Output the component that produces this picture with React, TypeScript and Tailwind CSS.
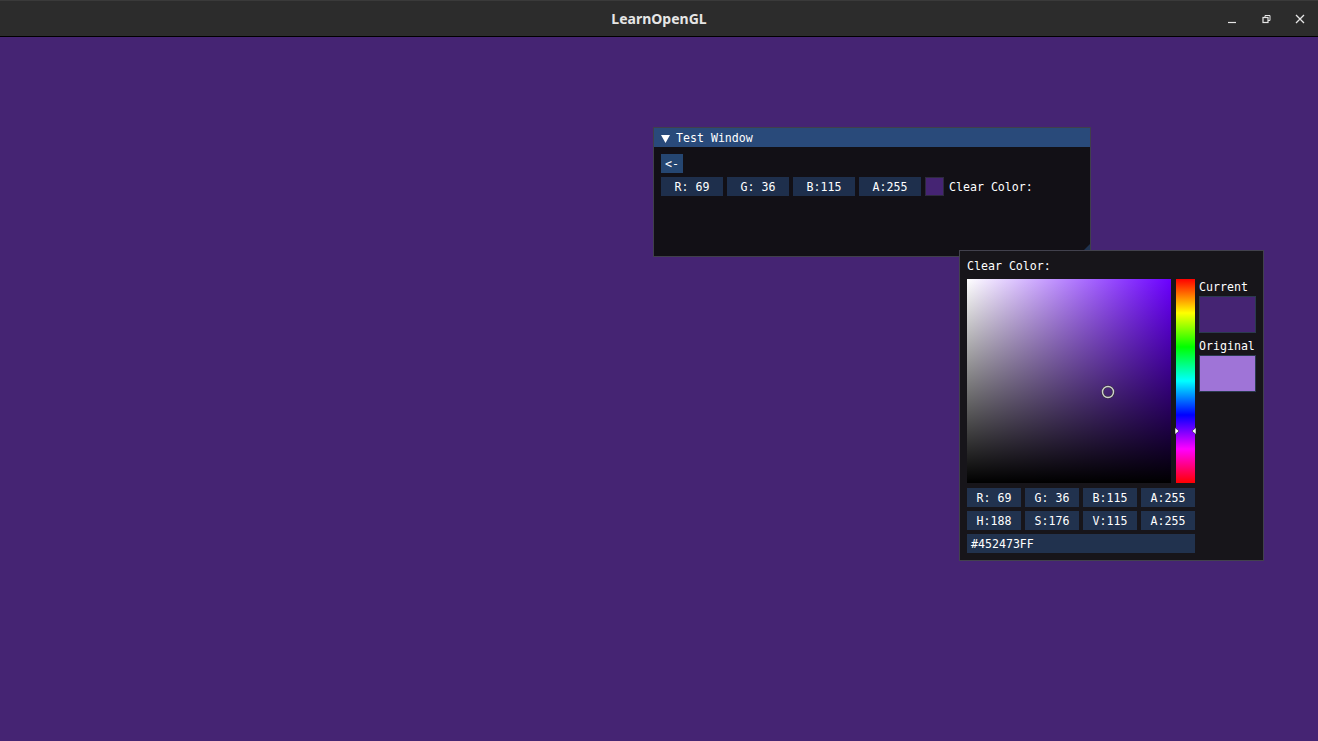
import React from "react";

const mono = { fontFamily: '"DejaVu Sans Mono", "Liberation Mono", monospace' } as React.CSSProperties;

function Field({ w, children, left }: { w: string; children: React.ReactNode; left?: boolean }) {
  return (
    <div
      className={`${w} h-[19px] pt-[2px] bg-[#1e2f4c] flex items-center ${left ? "justify-start pl-[4px]" : "justify-center"} text-white text-[11.6px] leading-none whitespace-pre`}
    >
      {children}
    </div>
  );
}

function PField({ children, left, w }: { children: React.ReactNode; left?: boolean; w: string }) {
  return (
    <div
      className={`${w} h-[19px] pt-[2px] bg-[#21324e] flex items-center ${left ? "justify-start pl-[4px]" : "justify-center"} text-white text-[11.6px] leading-none whitespace-pre`}
    >
      {children}
    </div>
  );
}

export default function App() {
  return (
    <div className="w-[1318px] h-[741px] flex flex-col overflow-hidden bg-[#452473]">
      {/* OS title bar */}
      <div className="h-[37px] shrink-0 bg-[#2c2c2c] border-t border-t-[#3a3a3a] border-b border-b-black flex items-center relative">
        <div
          className="flex-1 text-center text-[14px] font-bold text-[#e6e6e6]"
          style={{ fontFamily: '"Noto Sans", "Open Sans", sans-serif' }}
        >
          LearnOpenGL
        </div>
        <div className="absolute right-[12px] top-0 h-[36px] flex items-center gap-[22px]">
          <svg width="12" height="12" viewBox="0 0 12 12">
            <line x1="2" y1="9.5" x2="10" y2="9.5" stroke="#e6e6e6" strokeWidth="1.2" />
          </svg>
          <svg width="12" height="12" viewBox="0 0 12 12">
            <rect x="3" y="4.5" width="5" height="5" fill="none" stroke="#e6e6e6" strokeWidth="1.2" />
            <path d="M5 4.5 V2.5 H10 V7.5 H8" fill="none" stroke="#e6e6e6" strokeWidth="1" />
          </svg>
          <svg width="12" height="12" viewBox="0 0 12 12">
            <path d="M2 2 L10 10 M10 2 L2 10" stroke="#e6e6e6" strokeWidth="1.3" />
          </svg>
        </div>
      </div>

      {/* Desktop area */}
      <div className="relative flex-1" style={mono}>
        {/* Test Window */}
        <div className="absolute left-[653px] top-[90px] w-[438px] h-[130px] border border-[rgba(110,110,128,0.5)] bg-[#121016] flex flex-col">
          <div className="h-[19px] pt-[2px] bg-[#294a7a] flex items-center pl-[7px] gap-[6px] text-white text-[11.6px] leading-none">
            <svg width="9" height="8" viewBox="0 0 9 8">
              <path d="M0 0 H9 L4.5 8 Z" fill="#ffffff" />
            </svg>
            <span>Test Window</span>
          </div>
          <div className="flex flex-col gap-[4px] pl-[7px] pt-[7px]">
            <div className="w-[22px] h-[19px] pt-[2px] bg-[#254671] flex items-center justify-center text-white text-[11.6px] leading-none">
              &lt;-
            </div>
            <div className="flex items-center gap-[4px]">
              <Field w="w-[62px]">R: 69</Field>
              <Field w="w-[62px]">G: 36</Field>
              <Field w="w-[62px]">B:115</Field>
              <Field w="w-[62px]">A:255</Field>
              <div className="w-[19px] h-[19px] bg-[#452473] border border-[#2e2b3e]" />
              <span className="text-white text-[11.6px] leading-none pt-[2px] ml-[1px]">Clear Color:</span>
            </div>
          </div>
          <div className="flex-1" />
          <div className="flex justify-end">
            <svg width="12" height="12" viewBox="0 0 12 12">
              <path d="M12 0 V12 H0 Z" fill="#1f3350" />
            </svg>
          </div>
        </div>

        {/* Color picker popup */}
        <div className="absolute left-[959px] top-[213px] w-[305px] h-[311px] border border-[rgba(110,110,128,0.5)] bg-[#17151a] pl-[7px] pt-[8px]">
          <div className="h-[13px] pt-[2px] flex items-center text-white text-[11.6px] leading-none">Clear Color:</div>
          <div className="flex mt-[7px]">
            {/* SV square */}
            <div
              className="relative w-[204px] h-[204px]"
              style={{ background: "linear-gradient(to right, #ffffff, #6b00ff)" }}
            >
              <div
                className="absolute inset-0"
                style={{ background: "linear-gradient(to bottom, rgba(0,0,0,0), #000000)" }}
              />
              <svg className="absolute left-[134px] top-[106px]" width="14" height="14" viewBox="0 0 14 14">
                <circle cx="7" cy="7" r="5.5" fill="none" stroke="#333" strokeWidth="2.5" />
                <circle cx="7" cy="7" r="5.5" fill="none" stroke="#d0d0d0" strokeWidth="1.4" />
              </svg>
            </div>
            {/* Hue bar */}
            <div
              className="relative w-[19px] h-[204px] ml-[5px]"
              style={{
                background:
                  "linear-gradient(to bottom, #ff0000 0%, #ffff00 16.67%, #00ff00 33.33%, #00ffff 50%, #0000ff 66.67%, #ff00ff 83.33%, #ff0000 100%)",
              }}
            >
              <svg className="absolute left-[-1px] top-[148px]" width="21" height="8" viewBox="0 0 21 8">
                <path d="M0 0.5 L4 4 L0 7.5 Z" fill="#ffffff" stroke="#000" strokeWidth="0.5" />
                <path d="M21 0.5 L17 4 L21 7.5 Z" fill="#ffffff" stroke="#000" strokeWidth="0.5" />
              </svg>
            </div>
            {/* Current / Original */}
            <div className="flex flex-col ml-[4px]">
              <div className="h-[13px] mt-[1px] pt-[2px] flex items-center text-white text-[11.6px] leading-none">Current</div>
              <div className="w-[57px] h-[37px] mt-[3px] bg-[#452473] border border-[#2b3a4f]" />
              <div className="h-[13px] mt-[6px] pt-[2px] flex items-center text-white text-[11.6px] leading-none">Original</div>
              <div className="w-[57px] h-[37px] mt-[3px] bg-[#9f74d7] border border-[#2b3a4f]" />
            </div>
          </div>
          <div className="flex flex-col gap-[4px] mt-[5px]">
            <div className="flex gap-[4px]">
              <PField w="w-[54px]">R: 69</PField>
              <PField w="w-[54px]">G: 36</PField>
              <PField w="w-[54px]">B:115</PField>
              <PField w="w-[54px]">A:255</PField>
            </div>
            <div className="flex gap-[4px]">
              <PField w="w-[54px]">H:188</PField>
              <PField w="w-[54px]">S:176</PField>
              <PField w="w-[54px]">V:115</PField>
              <PField w="w-[54px]">A:255</PField>
            </div>
            <PField w="w-[228px]" left>
              #452473FF
            </PField>
          </div>
        </div>
      </div>
    </div>
  );
}
